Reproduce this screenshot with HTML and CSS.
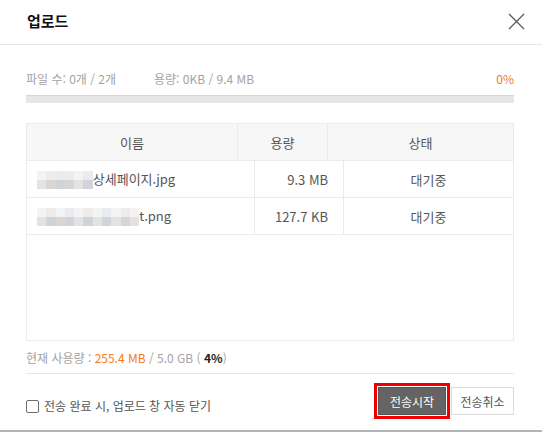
FILE: index.html
```html
<!DOCTYPE html>
<html lang="ko">
<head>
<meta charset="utf-8">
<title>업로드</title>
<link rel="stylesheet" href="styles.css">
</head>
<body>
<div class="dialog">
  <div class="header">
    <h1 class="title">업로드</h1>
    <button class="close" aria-label="닫기">
      <svg width="17" height="17" viewBox="0 0 17 17"><path d="M1 1 L16 16 M16 1 L1 16" stroke="#5a5a5a" stroke-width="1.3" fill="none"/></svg>
    </button>
  </div>
  <div class="content">
    <div class="stats">
      <div class="stats-left">
        <span class="count">파일 수: 0개 / 2개</span>
        <span class="size">용량: 0KB / 9.4 MB</span>
      </div>
      <span class="percent">0%</span>
    </div>
    <div class="progress"><div class="progress-fill" style="width:0%"></div></div>

    <div class="table">
      <div class="thead">
        <div class="th th-name">이름</div>
        <div class="th th-size">용량</div>
        <div class="th th-status">상태</div>
      </div>
      <div class="row">
        <div class="td td-name">
          <span class="mosaic m6">
            <i class="a"></i><i class="b"></i><i class="c"></i><i class="b"></i><i class="a"></i><i class="c"></i>
            <i class="d"></i><i class="e"></i><i class="f"></i><i class="e"></i><i class="d"></i><i class="f"></i>
          </span><span class="fname">상세페이지.jpg</span>
        </div>
        <div class="td td-size">9.3 MB</div>
        <div class="td td-status">대기중</div>
      </div>
      <div class="row">
        <div class="td td-name">
          <span class="mosaic m11">
            <i class="a"></i><i class="b"></i><i class="a"></i><i class="c"></i><i class="a"></i><i class="b"></i><i class="a"></i><i class="c"></i><i class="a"></i><i class="b"></i><i class="a"></i>
            <i class="d"></i><i class="f"></i><i class="e"></i><i class="f"></i><i class="d"></i><i class="f"></i><i class="d"></i><i class="f"></i><i class="d"></i><i class="e"></i><i class="d"></i>
          </span><span class="fname">t.png</span>
        </div>
        <div class="td td-size">127.7 KB</div>
        <div class="td td-status">대기중</div>
      </div>
    </div>

    <div class="usage">현재 사용량 : <span class="orange">255.4 MB</span> / 5.0 GB ( <b class="pct">4%</b>)</div>
  </div>
  <div class="footer">
    <label class="auto-close"><span class="checkbox"></span>전송 완료 시, 업로드 창 자동 닫기</label>
    <div class="buttons">
      <button class="btn btn-start">전송시작</button>
      <button class="btn btn-cancel">전송취소</button>
    </div>
  </div>
</div>
</body>
</html>
```

FILE: styles.css
```css
* { box-sizing: border-box; }
html, body { margin: 0; padding: 0; }
body {
  width: 542px;
  height: 432px;
  background: #fff;
  font-family: "Noto Sans CJK KR", "Noto Sans", sans-serif;
  color: #555;
  overflow: hidden;
}
.dialog {
  height: 432px;
  border-bottom: 2px solid #b4b4b4;
  display: flex;
  flex-direction: column;
}
.header {
  height: 45px;
  border-bottom: 1px solid #e6e6e6;
  display: flex;
  align-items: center;
  justify-content: space-between;
  padding: 0 17px 0 27px;
}
.title {
  margin: 0;
  font-size: 15px;
  font-weight: 700;
  color: #111;
  line-height: 20px;
  margin-top: -2px;
}
.close {
  border: 0;
  background: none;
  padding: 0;
  width: 17px;
  height: 17px;
  display: flex;
  margin-top: -2px;
}
.content {
  padding: 25px 28px 0 26px;
}
.stats {
  display: flex;
  justify-content: space-between;
  align-items: center;
  height: 18px;
  font-size: 12px;
  line-height: 18px;
  color: #a3a3a3;
}
.stats-left { display: flex; gap: 0; }
.count { width: 128px; }
.percent { color: #f47a20; }
.progress {
  margin-top: 7px;
  height: 8px;
  background: #e6e6e6;
  border-top: 1px solid #d6d6d6;
}
.progress-fill { height: 100%; background: #f47a20; }

.table {
  margin-top: 20px;
  height: 218px;
  border: 1px solid #ebebeb;
}
.thead {
  display: grid;
  grid-template-columns: 210px 90px 1fr;
  height: 37px;
  background: #f7f7f7;
  border-bottom: 1px solid #ebebeb;
}
.th {
  display: flex;
  align-items: center;
  justify-content: center;
  font-size: 13px;
  color: #555;
}
.th + .th { border-left: 1px solid #ebebeb; }
.row {
  display: grid;
  grid-template-columns: 227px 89px 1fr;
  height: 37px;
  border-bottom: 1px solid #ebebeb;
}
.td {
  display: flex;
  align-items: center;
  font-size: 13px;
  color: #555;
}
.td + .td { border-left: 1px solid #ebebeb; }
.td-name { padding-left: 10px; }
.td-size { justify-content: flex-end; padding-right: 15px; }
.td-status { justify-content: center; }
.fname { line-height: 18px; }

.mosaic {
  display: inline-grid;
  grid-auto-rows: 9px;
  margin-top: 1px;
}
.m6 { grid-template-columns: repeat(6, 9.3px); }
.m11 { grid-template-columns: repeat(11, 9.3px); }
.mosaic i { display: block; }
.mosaic .a { background: #f4f3f3; }
.mosaic .b { background: #efebe9; }
.mosaic .c { background: #eaebee; }
.mosaic .d { background: #e4e3e3; }
.mosaic .e { background: #d8d5d3; }
.mosaic .f { background: #d0d3d8; }

.usage {
  margin-top: 8px;
  font-size: 12px;
  line-height: 18px;
  color: #a3a3a3;
  padding-bottom: 6px;
  border-bottom: 1px solid #e6e6e6;
}
.orange { color: #f47a20; }
.pct { color: #222; font-weight: 700; }

.footer {
  padding: 13px 28px 0 26px;
  display: flex;
  justify-content: space-between;
  align-items: flex-start;
}
.auto-close {
  display: flex;
  align-items: center;
  gap: 5px;
  font-size: 12px;
  color: #555;
  margin-top: 11px;
  line-height: 16px;
}
.checkbox {
  width: 13px;
  height: 13px;
  border: 1px solid #6e6e6e;
  border-radius: 2px;
  background: #fff;
}
.buttons { display: flex; gap: 5px; }
.btn {
  height: 28px;
  font-family: inherit;
  font-size: 12px;
  padding: 0;
  cursor: pointer;
}
.btn-start {
  width: 68px;
  background: #646464;
  color: #fff;
  border: 1px solid #555;
  outline: 3px solid #ee0000;
  outline-offset: 1px;
}
.btn-cancel {
  width: 63px;
  background: #fff;
  color: #555;
  border: 1px solid #dcdcdc;
}
```
